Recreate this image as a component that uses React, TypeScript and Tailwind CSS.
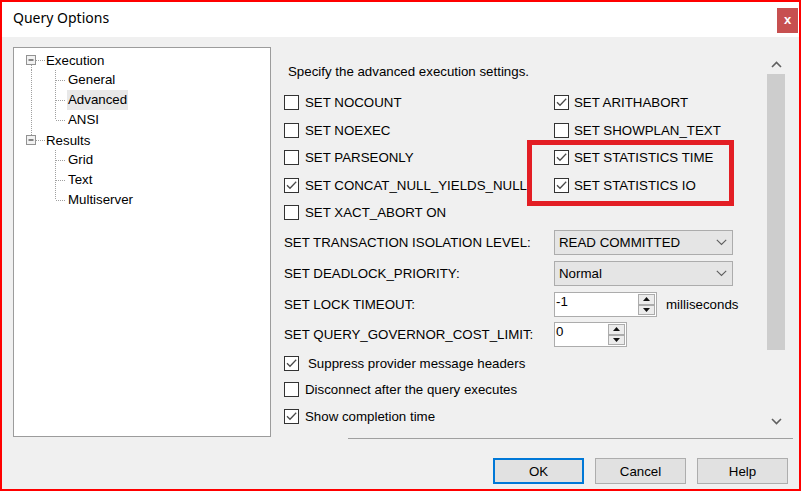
import React from "react";

function Box({ checked }: { checked?: boolean }) {
  return (
    <span className="w-[15px] h-[15px] border border-[#333333] bg-white shrink-0 flex items-center justify-center">
      {checked && (
        <svg width="13" height="13" viewBox="0 0 13 13">
          <path d="M2 6.2 L5 9.3 L11.2 2.8" fill="none" stroke="#4a4a4a" strokeWidth="1.25" />
        </svg>
      )}
    </span>
  );
}

function Check({ label, checked, gap }: { label: string; checked?: boolean; gap?: string }) {
  return (
    <div className="flex items-center h-full whitespace-nowrap">
      <Box checked={checked} />
      <span className={gap ?? "ml-[6px]"}>{label}</span>
    </div>
  );
}

const dot = { stroke: "#a0a0a0", strokeWidth: 1, strokeDasharray: "1 1" };

function ParentRow({ label, up, down }: { label: string; up?: boolean; down?: boolean }) {
  return (
    <div className="flex items-center h-[20px]">
      <svg width="32" height="20" className="shrink-0">
        {up && <line x1="17.5" y1="0" x2="17.5" y2="5" {...dot} />}
        {down && <line x1="17.5" y1="15" x2="17.5" y2="20" {...dot} />}
        <rect x="12.5" y="5.5" width="9" height="9" fill="#f2f2f2" stroke="#929292" />
        <line x1="14.5" y1="10" x2="19.5" y2="10" stroke="#3a3a3a" strokeWidth="1.2" />
        <line x1="22" y1="10.5" x2="31" y2="10.5" {...dot} />
      </svg>
      <span>{label}</span>
    </div>
  );
}

function ChildRow({
  label,
  parentLine,
  last,
  selected,
}: {
  label: string;
  parentLine?: boolean;
  last?: boolean;
  selected?: boolean;
}) {
  return (
    <div className="flex items-center h-[20px]">
      <svg width="53" height="20" className="shrink-0">
        {parentLine && <line x1="17.5" y1="0" x2="17.5" y2="20" {...dot} />}
        <line x1="41.5" y1="0" x2="41.5" y2={last ? 10 : 20} {...dot} />
        <line x1="42" y1="10.5" x2="52" y2="10.5" {...dot} />
      </svg>
      <span className={selected ? "bg-[#e8e8e8] px-[1px] leading-[20px]" : "px-[1px] leading-[20px]"}>{label}</span>
    </div>
  );
}

function Chevron() {
  return (
    <svg width="11" height="7" viewBox="0 0 11 7">
      <polyline points="0.8,0.8 5.5,5.5 10.2,0.8" fill="none" stroke="#5e5e5e" strokeWidth="1.1" />
    </svg>
  );
}

function Combo({ value }: { value: string }) {
  return (
    <div className="w-[179px] h-[25px] bg-[#e5e5e5] border border-[#acacac] flex items-center justify-between pl-[4px] pr-[5px]">
      <span>{value}</span>
      <Chevron />
    </div>
  );
}

function SpinBtn({ up }: { up?: boolean }) {
  return (
    <div className="flex-1 border border-[#acacac] bg-[#ececec] flex items-center justify-center">
      <svg width="7" height="4" viewBox="0 0 7 4">
        {up ? <polygon points="0,4 3.5,0 7,4" fill="#111" /> : <polygon points="0,0 3.5,4 7,0" fill="#111" />}
      </svg>
    </div>
  );
}

function Spinner({ value, w }: { value: string; w: string }) {
  return (
    <div className={`${w} h-[25px] bg-white border border-[#acacac] flex`}>
      <span className="flex-1 pl-[1px] pt-[1px] leading-[15px]">{value}</span>
      <div className="w-[18px] flex flex-col py-[1px] pr-[1px]">
        <SpinBtn up />
        <SpinBtn />
      </div>
    </div>
  );
}

function Btn({ label, primary }: { label: string; primary?: boolean }) {
  return (
    <div
      className={
        primary
          ? "w-[91px] h-[26px] bg-[#e1e1e1] border-2 border-[#0078d7] flex items-center justify-center"
          : "w-[91px] h-[26px] bg-[#e1e1e1] border border-[#adadad] flex items-center justify-center"
      }
    >
      {label}
    </div>
  );
}

export default function App() {
  return (
    <div className="relative w-[801px] h-[491px] border-2 border-[#ff0000] bg-[#f0f0f0] flex flex-col overflow-hidden text-[13.3px] leading-[15px] text-black [font-family:'Liberation_Sans',Arial,sans-serif]">
      {/* Title bar */}
      <div className="h-[35px] shrink-0 bg-white flex justify-between">
        <div className="pl-[11px] pt-[6px] text-[14px] leading-[20px] [font-family:'Noto_Sans',sans-serif]">
          Query Options
        </div>
        <div className="mt-[6px] mr-[1px] w-[21px] h-[25px] bg-[#c75050] text-white flex items-center justify-center text-[13px] font-bold leading-none pb-[2px]">
          x
        </div>
      </div>

      {/* Body */}
      <div className="flex-1 flex flex-col">
        <div className="flex pt-[10px] pl-[11px]">
          {/* Tree */}
          <div className="w-[258px] h-[390px] bg-white border border-[#9c9c9c] pt-[2px]">
            <ParentRow label="Execution" down />
            <ChildRow label="General" parentLine />
            <ChildRow label="Advanced" parentLine selected />
            <ChildRow label="ANSI" parentLine last />
            <ParentRow label="Results" up />
            <ChildRow label="Grid" />
            <ChildRow label="Text" />
            <ChildRow label="Multiserver" last />
          </div>

          {/* Right panel */}
          <div className="w-[522px] flex flex-col">
            <div className="flex h-[391px]">
              <div className="flex-1 pl-[13px] flex flex-col">
                <div className="mt-[17px] pl-[4px]">Specify the advanced execution settings.</div>
                <div className="mt-[10px] grid grid-cols-[270px_1fr] auto-rows-[27.5px]">
                  <Check label="SET NOCOUNT" />
                  <Check label="SET ARITHABORT" checked gap="ml-[5px]" />
                  <Check label="SET NOEXEC" />
                  <Check label="SET SHOWPLAN_TEXT" gap="ml-[5px]" />
                  <Check label="SET PARSEONLY" />
                  <Check label="SET STATISTICS TIME" checked gap="ml-[5px]" />
                  <Check label="SET CONCAT_NULL_YIELDS_NULL" checked />
                  <Check label="SET STATISTICS IO" checked gap="ml-[5px]" />
                  <Check label="SET XACT_ABORT ON" />
                </div>
                <div className="mt-[3.5px] flex items-center h-[25px]">
                  <span className="w-[270px]">SET TRANSACTION ISOLATION LEVEL:</span>
                  <Combo value="READ COMMITTED" />
                </div>
                <div className="mt-[6px] flex items-center h-[25px]">
                  <span className="w-[270px]">SET DEADLOCK_PRIORITY:</span>
                  <Combo value="Normal" />
                </div>
                <div className="mt-[6px] flex items-center h-[25px]">
                  <span className="w-[270px]">SET LOCK TIMEOUT:</span>
                  <Spinner value="-1" w="w-[103px]" />
                  <span className="ml-[9px]">milliseconds</span>
                </div>
                <div className="mt-[5px] flex items-center h-[25px]">
                  <span className="w-[270px]">SET QUERY_GOVERNOR_COST_LIMIT:</span>
                  <Spinner value="0" w="w-[73px]" />
                </div>
                <div className="mt-[3px] h-[26px]">
                  <Check label="Suppress provider message headers" checked gap="ml-[9px]" />
                </div>
                <div className="h-[26px]">
                  <Check label="Disconnect after the query executes" />
                </div>
                <div className="mt-[1px] h-[26px]">
                  <Check label="Show completion time" checked />
                </div>
              </div>

              {/* Scrollbar */}
              <div className="w-[18px] mt-[7px] h-[377px] flex flex-col">
                <div className="h-[20px] flex items-center justify-center">
                  <svg width="11" height="7" viewBox="0 0 11 7">
                    <polyline points="1,6 5.5,1.5 10,6" fill="none" stroke="#606060" strokeWidth="1.6" />
                  </svg>
                </div>
                <div className="h-[276px] bg-[#cdcdcd]" />
                <div className="flex-1" />
                <div className="h-[20px] flex items-center justify-center">
                  <svg width="11" height="7" viewBox="0 0 11 7">
                    <polyline points="1,1 5.5,5.5 10,1" fill="none" stroke="#606060" strokeWidth="1.6" />
                  </svg>
                </div>
              </div>
              <div className="w-[8px]" />
            </div>
            <div className="h-px ml-[77px] bg-[#a0a0a0]" />
          </div>
        </div>

        {/* Buttons */}
        <div className="mt-[19px] flex justify-end gap-[11px] pr-[11px]">
          <Btn label="OK" primary />
          <Btn label="Cancel" />
          <Btn label="Help" />
        </div>
      </div>

      {/* Annotation highlight */}
      <div className="absolute left-[525px] top-[138px] w-[207px] h-[66px] border-[5px] border-[#e31e24] pointer-events-none" />
    </div>
  );
}
